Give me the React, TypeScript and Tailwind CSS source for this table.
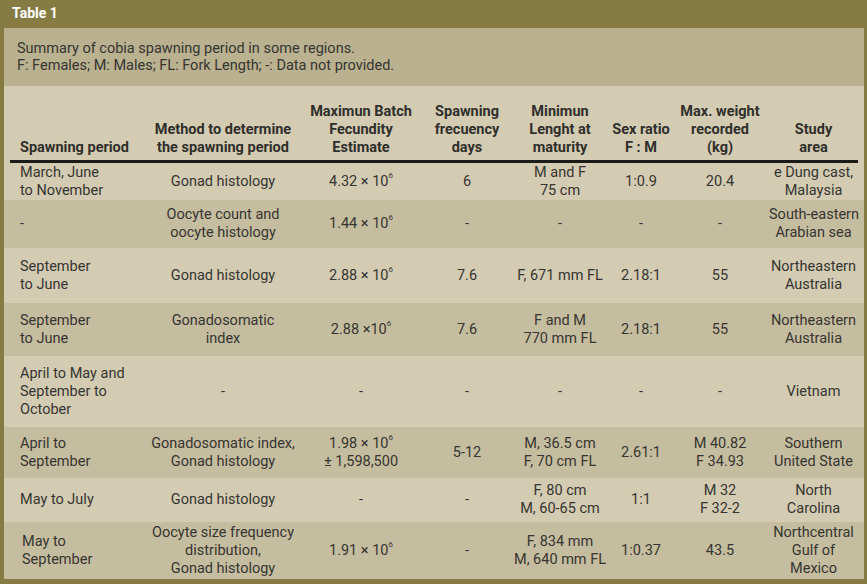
import React from 'react';

type Row = {
  h: string;
  dark: boolean;
  cells: React.ReactNode[];
};

const Sci = ({ n, pad = true }: { n: string; pad?: boolean }) => (
  <span>
    {n}
    {pad ? ' × ' : ' ×'}10<sup className="text-[8px] align-[4px]">6</sup>
  </span>
);

const rows: Row[] = [
  {
    h: 'h-[37px]',
    dark: false,
    cells: ['March, June\nto November', 'Gonad histology', <Sci n="4.32" />, '6', 'M and F\n75 cm', '1:0.9', '20.4', 'e Dung cast,\nMalaysia'],
  },
  {
    h: 'h-[48px]',
    dark: true,
    cells: ['-', 'Oocyte count and\noocyte histology', <Sci n="1.44" />, '-', '-', '-', '-', 'South-eastern\nArabian sea'],
  },
  {
    h: 'h-[55px]',
    dark: false,
    cells: ['September\nto June', 'Gonad histology', <Sci n="2.88" />, '7.6', 'F, 671 mm FL', '2.18:1', '55', 'Northeastern\nAustralia'],
  },
  {
    h: 'h-[53px]',
    dark: true,
    cells: ['September\nto June', 'Gonadosomatic\nindex', <Sci n="2.88" pad={false} />, '7.6', 'F and M\n770 mm FL', '2.18:1', '55', 'Northeastern\nAustralia'],
  },
  {
    h: 'h-[71px]',
    dark: false,
    cells: ['April to May and\nSeptember to\nOctober', '-', '-', '-', '-', '-', '-', 'Vietnam'],
  },
  {
    h: 'h-[51px]',
    dark: true,
    cells: ['April to\nSeptember', 'Gonadosomatic index,\nGonad histology', <span>
      <Sci n="1.98" />
      <br />± 1,598,500
    </span>, '5-12', 'M, 36.5 cm\nF, 70 cm FL', '2.61:1', 'M 40.82\nF 34.93', 'Southern\nUnited State'],
  },
  {
    h: 'h-[44px]',
    dark: false,
    cells: ['May to July', 'Gonad histology', '-', '-', 'F, 80 cm\nM, 60-65 cm', '1:1', 'M 32\nF 32-2', 'North\nCarolina'],
  },
  {
    h: 'h-[57px]',
    dark: true,
    cells: [<span className="pl-[2px] inline-block">May to<br />September</span>, 'Oocyte size frequency\ndistribution,\nGonad histology', <Sci n="1.91" />, '-', 'F, 834 mm\nM, 640 mm FL', '1:0.37', '43.5', 'Northcentral\nGulf of\nMexico'],
  },
];

const headers = [
  'Spawning period',
  'Method to determine\nthe spawning period',
  'Maximun Batch\nFecundity\nEstimate',
  'Spawning\nfrecuency\ndays',
  'Minimun\nLenght at\nmaturity',
  'Sex ratio\nF : M',
  'Max. weight\nrecorded\n(kg)',
  'Study\narea',
];

const cols = 'grid grid-cols-[145px_148px_128px_84px_102px_60px_98px_95px]';

export default function App() {
  return (
    <div
      className="w-[867px] h-[584px] bg-[#857b43] text-[#363531] overflow-hidden"
      style={{ fontFamily: 'Roboto, "Liberation Sans", sans-serif' }}
    >
      <div className="h-[27px] flex items-center pl-[12px] text-white font-bold text-[14px]">Table 1</div>
      <div className="ml-[4px] mr-[3px] mt-[1px] border-b-[4px] border-[#857b43]">
        <div className="h-[58px] bg-[#b9b18f] flex flex-col justify-center pl-[13px] text-[14.5px] leading-[17px]">
          <div>Summary of cobia spawning period in some regions.</div>
          <div>F: Females; M: Males; FL: Fork Length; -: Data not provided.</div>
        </div>
        <div className="bg-[#d3ccb3]">
          <div className={`${cols} h-[74px] items-end pb-[3px] font-bold text-[14.5px] leading-[18px] text-[#302f2b]`}>
            {headers.map((t, i) => (
              <div
                key={i}
                className={`whitespace-pre ${i === 0 ? 'pl-[16px] text-left' : 'text-center'} ${i === 7 ? 'pr-[6px]' : ''}`}
              >
                {t}
              </div>
            ))}
          </div>
          <div className="mx-[6px] h-[3px] bg-[#1a1a18]" />
          {rows.map((r, ri) => (
            <div
              key={ri}
              className={`${cols} ${r.h} items-center text-[14.5px] leading-[18px] ${r.dark ? 'bg-[#c5bd9f]' : 'bg-[#d3ccb3]'}`}
            >
              {r.cells.map((c, ci) => (
                <div
                  key={ci}
                  className={`whitespace-pre ${ci === 0 ? 'pl-[16px] text-left' : 'text-center'} ${ci === 7 ? 'pr-[6px]' : ''}`}
                >
                  {c}
                </div>
              ))}
            </div>
          ))}
        </div>
      </div>
    </div>
  );
}
